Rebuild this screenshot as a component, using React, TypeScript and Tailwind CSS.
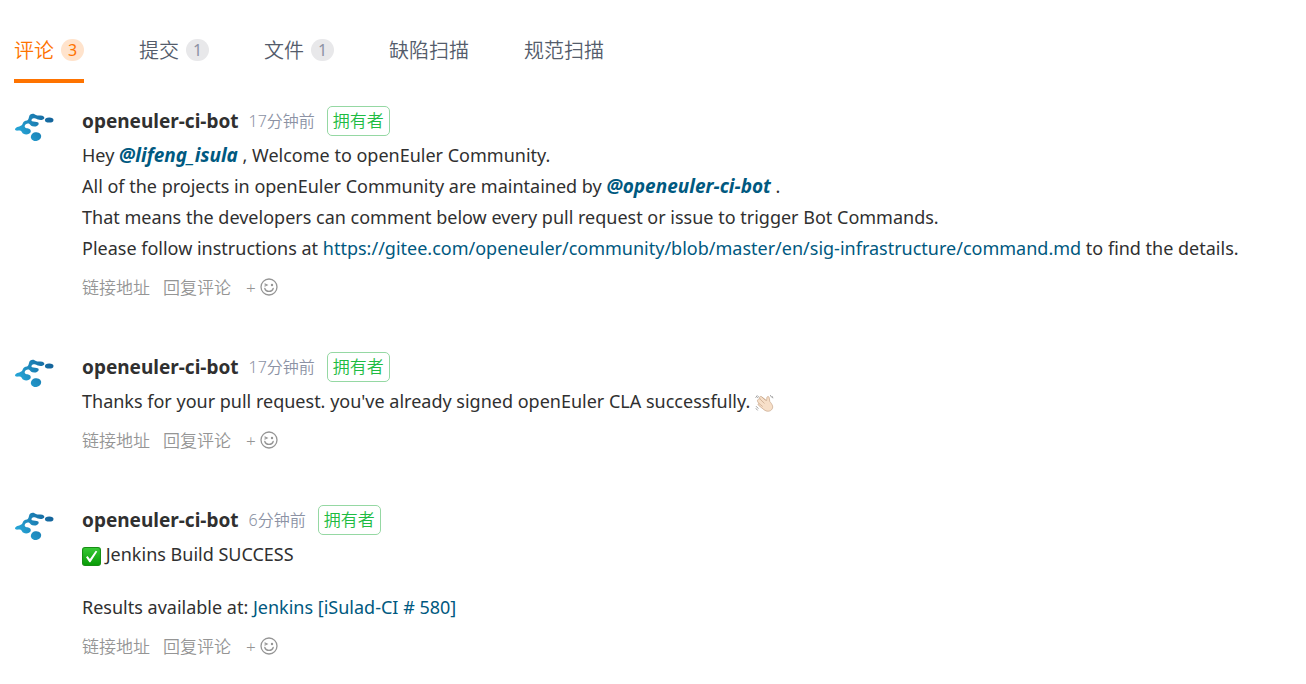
import type { ReactNode } from "react";

type Tab = { label: string; count?: number };

const tabs: Tab[] = [
  { label: "评论", count: 3 },
  { label: "提交", count: 1 },
  { label: "文件", count: 1 },
  { label: "缺陷扫描" },
  { label: "规范扫描" },
];

function TabBar() {
  return (
    <nav className="flex gap-[55px] text-xl/7 font-[350]">
      {tabs.map((tab, i) => {
        const active = i === 0;
        return (
          <a
            key={tab.label}
            href="#"
            aria-current={active ? "page" : undefined}
            className={
              active
                ? "flex h-[46px] items-start gap-[7px] border-b-4 border-[#fe7300] text-[#fe7300]"
                : "flex h-[46px] items-start gap-[7px] text-[#545c6b]"
            }
          >
            <span>{tab.label}</span>
            {tab.count !== undefined && (
              <span
                className={
                  active
                    ? "mt-[2px] flex h-[22px] w-[23px] items-center justify-center rounded-full bg-[#ffe3cc] text-base font-normal text-[#fe7300]"
                    : "mt-[2px] flex h-[22px] w-[23px] items-center justify-center rounded-full bg-[#e8e8ea] text-base font-normal text-[#8c92a4]"
                }
              >
                {tab.count}
              </span>
            )}
          </a>
        );
      })}
    </nav>
  );
}

function Avatar() {
  return (
    <svg viewBox="0 0 40 30" className="mt-[6px] h-[30px] w-10 shrink-0" role="img" aria-label="openeuler-ci-bot">
      <defs>
        <linearGradient id="euler" gradientUnits="userSpaceOnUse" x1="2" y1="22" x2="34" y2="2">
          <stop offset="0" stopColor="#27aadb" />
          <stop offset="1" stopColor="#14649b" />
        </linearGradient>
      </defs>
      <g fill="url(#euler)">
        <path d="M1 17C2.500 14.500 6 14.800 8 13C9 11.500 9 9.500 11.500 8.800C14 8.800 14.500 7 15 5C15.500 2 18.500 1 20.500 2.200C22.500 3.600 24 3.400 26.500 3.600C29.500 3.800 30.600 5 30.300 6.300C29.800 8.200 26 8.400 24 7.600C22.500 6.800 21.500 5.800 19.500 6.300C17.500 6.800 16.800 8.600 18 9.200C19.500 10 22.500 9.300 24.200 10.600C25.500 12 24 14.600 20.800 14.600C17.500 14.800 16.500 13 15.500 12C13.800 10.900 11 12 10.700 14C10.500 16.300 13 16 15 16.700C17.500 17.800 17.300 20.500 15 21.800C12.500 23 8.700 22.300 8 20.300C7.400 18.600 6 18.300 4 18.600C2.300 18.800 .8 18.300 1 17Z" />
        <ellipse cx="35.200" cy="8" rx="4.300" ry="2.600" />
        <ellipse cx="22" cy="24.600" rx="5.200" ry="4.400" transform="rotate(-15 22 24.600)" />
      </g>
    </svg>
  );
}

function Smile() {
  return (
    <svg viewBox="0 0 18 18" className="mb-[2px] size-[18px]" fill="none" stroke="#959595" strokeWidth="1.300" strokeLinecap="round" aria-hidden="true">
      <circle cx="9" cy="9" r="8" />
      <path d="M4.800 10.500C5.800 14.400 12.200 14.400 13.200 10.500M5 6L7 7L5 8" />
      <circle cx="12" cy="7" r="1.200" fill="#959595" stroke="none" />
    </svg>
  );
}

function Wave() {
  return (
    <svg viewBox="0 0 18 18" className="inline-block size-[19px] align-[-4px]" role="img" aria-label="wave">
      <path
        d="M3 6.200C3.300 5.300 4.200 5.200 4.800 5.800L4.300 4.200C4.500 3.200 5.600 3 6.300 3.600L11 7.200L11.300 4.200C11.600 3 13.200 3.100 13.400 4.300L14 8C16 10.500 17.500 12.500 16.300 15C14.800 17.800 11 17.900 8.500 15.800L3.300 11.600C2.600 10.700 3 10 3.700 9.900L2.500 8.200C2.100 7.300 2.300 6.700 3 6.200Z"
        fill="#f7dfc8"
        stroke="#c7a78c"
        strokeWidth=".7"
      />
      <path d="M4.800 5.800L9 9.900M3.700 9.900L7.300 12.800M6.300 3.600L10 7" stroke="#c7a78c" strokeWidth=".7" fill="none" />
      <path d="M.6 4.500L2.200 2.200M2.300 4.800L3.300 3M14.500 2L15.800 4.200M16.200 3L17 5M1 12.500L3.200 14.800M.8 14.500L2.500 16.500" stroke="#9b9b9b" strokeWidth=".9" fill="none" />
    </svg>
  );
}

function Check() {
  return (
    <svg viewBox="0 0 18 18" className="inline-block size-[19px] align-[-5px]" role="img" aria-label="check">
      <defs>
        <linearGradient id="check" x1="0" y1="0" x2="0" y2="1">
          <stop offset="0" stopColor="#38c936" />
          <stop offset="1" stopColor="#079b05" />
        </linearGradient>
      </defs>
      <rect x=".5" y=".5" width="17" height="17" rx="2.500" fill="url(#check)" stroke="#178e14" />
      <path d="M3.800 9.800L5.300 8.600L7.500 11.400L13 3.500L14.500 4.300L8 14.400H7Z" fill="#fff" />
    </svg>
  );
}

function Mention({ name }: { name: string }) {
  return (
    <a href="#" className="text-[19px] font-bold text-[#005980] italic">
      @{name}
    </a>
  );
}

function Comment({ time, children }: { time: string; children: ReactNode }) {
  return (
    <article className="flex gap-7">
      <Avatar />
      <div className="min-w-0 flex-1">
        <header className="flex h-[30px] items-center">
          <a href="#" className="text-[19px] font-bold text-[#303030]">
            openeuler-ci-bot
          </a>
          <time className="ml-[10px] text-base font-[350] text-[#8c92a4]">{time}</time>
          <span className="ml-3 flex h-[30px] items-center rounded-[5px] border border-[#95d8a3] px-[5px] text-[17px] font-[350] text-[#1ebc42]">
            拥有者
          </span>
        </header>
        <div className="mt-1 text-lg/[31px] text-[#303030]">{children}</div>
        <footer className="mt-3 flex h-6 items-center gap-[13px] text-[17px] font-[350] text-[#959595]">
          <a href="#">链接地址</a>
          <button type="button">回复评论</button>
          <button type="button" aria-label="添加表情" className="ml-[2px] flex items-center gap-1">
            <span>+</span>
            <Smile />
          </button>
        </footer>
      </div>
    </article>
  );
}

export default function App() {
  return (
    <main className="min-h-screen bg-white px-[14px] pt-[37px] pb-6 font-['Noto_Sans','Noto_Sans_CJK_SC',sans-serif]">
      <TabBar />
      <section className="mt-[23px] flex flex-col gap-[52px]">
        <Comment time="17分钟前">
          <p>
            Hey <Mention name="lifeng_isula" /> , Welcome to openEuler Community.
            <br />
            All of the projects in openEuler Community are maintained by <Mention name="openeuler-ci-bot" /> .
            <br />
            That means the developers can comment below every pull request or issue to trigger Bot Commands.
            <br />
            Please follow instructions at{" "}
            <a href="https://gitee.com/openeuler/community/blob/master/en/sig-infrastructure/command.md" className="text-[#005980]">
              https://gitee.com/openeuler/community/blob/master/en/sig-infrastructure/command.md
            </a>{" "}
            to find the details.
          </p>
        </Comment>
        <Comment time="17分钟前">
          <p>
            Thanks for your pull request. you've already signed openEuler CLA successfully. <Wave />
          </p>
        </Comment>
        <Comment time="6分钟前">
          <p>
            <Check /> Jenkins Build SUCCESS
          </p>
          <p className="mt-[22px]">
            Results available at:{" "}
            <a href="#" className="text-[#005980]">
              Jenkins [iSulad-CI # 580]
            </a>
          </p>
        </Comment>
      </section>
    </main>
  );
}
